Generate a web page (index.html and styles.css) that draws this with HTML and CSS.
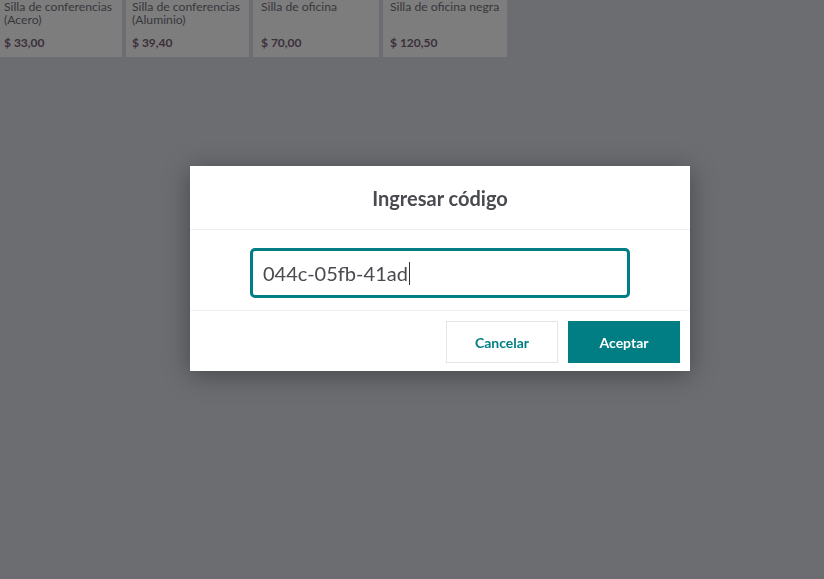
FILE: index.html
```html
<!DOCTYPE html>
<html lang="es">
<head>
    <meta charset="UTF-8">
    <meta name="viewport" content="width=device-width, initial-scale=1.0">
    <title>Punto de venta</title>
    <link rel="stylesheet" href="styles.css">
</head>
<body>
    <div class="products">
        <div class="product">
            <div class="product-name">Silla de conferencias (Acero)</div>
            <div class="product-price">$ 33,00</div>
        </div>
        <div class="product">
            <div class="product-name">Silla de conferencias (Aluminio)</div>
            <div class="product-price">$ 39,40</div>
        </div>
        <div class="product">
            <div class="product-name">Silla de oficina</div>
            <div class="product-price">$ 70,00</div>
        </div>
        <div class="product">
            <div class="product-name">Silla de oficina negra</div>
            <div class="product-price">$ 120,50</div>
        </div>
    </div>

    <div class="overlay">
        <div class="modal">
            <div class="modal-header">Ingresar código</div>
            <div class="modal-body">
                <div class="code-input"><span>044c-05fb-41ad</span><span class="caret"></span></div>
            </div>
            <div class="modal-footer">
                <button class="btn btn-secondary">Cancelar</button>
                <button class="btn btn-primary">Aceptar</button>
            </div>
        </div>
    </div>
</body>
</html>
```

FILE: styles.css
```css
* { box-sizing: border-box; }
html, body { height: 100%; }
body { margin: 0; font-family: Lato, "Open Sans", sans-serif; background-color: #6c6d71; overflow: hidden; }

.products { display: flex; gap: 4px; margin-top: -6px; margin-left: -4px; }
.product { width: 126px; height: 63px; padding: 6px 4px 7px 8px; background: #7d7d7e; color: #37373b; font-size: 12.2px; display: flex; flex-direction: column; justify-content: space-between; }
.product:nth-child(2) { width: 123px; padding-left: 6px; }
.product:nth-child(3) { width: 126px; padding-left: 8px; }
.product:nth-child(4) { width: 124px; padding-left: 7px; }
.product-name { line-height: 13px; }
.product-price { font-weight: bold; font-size: 12px; line-height: 15px; color: #3c2f3a; }

.overlay { position: fixed; inset: 0; }
.modal { position: absolute; left: 190px; top: 166px; width: 500px; background: white; box-shadow: 0 4px 24px rgba(0,0,0,0.35); }
.modal-header { height: 64px; border-bottom: 1px solid #f0f0f2; display: flex; align-items: center; justify-content: center; font-size: 20px; font-weight: bold; color: #4a4b51; }
.modal-body { padding: 18px 0 12px 60px; border-bottom: 1px solid #f0f0f2; }
.code-input { width: 380px; height: 50px; border: 3px solid #017e84; border-radius: 5px; padding-left: 10px; display: flex; align-items: center; font-size: 20px; color: #4a4b51; }
.caret { display: inline-block; width: 1px; height: 23px; background: #333; margin-left: 1px; }

.modal-footer { height: 60px; display: flex; justify-content: flex-end; align-items: flex-start; gap: 10px; padding: 10px 10px 0 0; }
.btn { width: 112px; height: 42px; font-family: Lato, sans-serif; font-weight: bold; font-size: 14px; border-radius: 0; cursor: pointer; }
.btn-secondary { background: white; color: #017e84; border: 1px solid #e4e4e6; }
.btn-primary { background: #017e84; color: white; border: none; }
```
